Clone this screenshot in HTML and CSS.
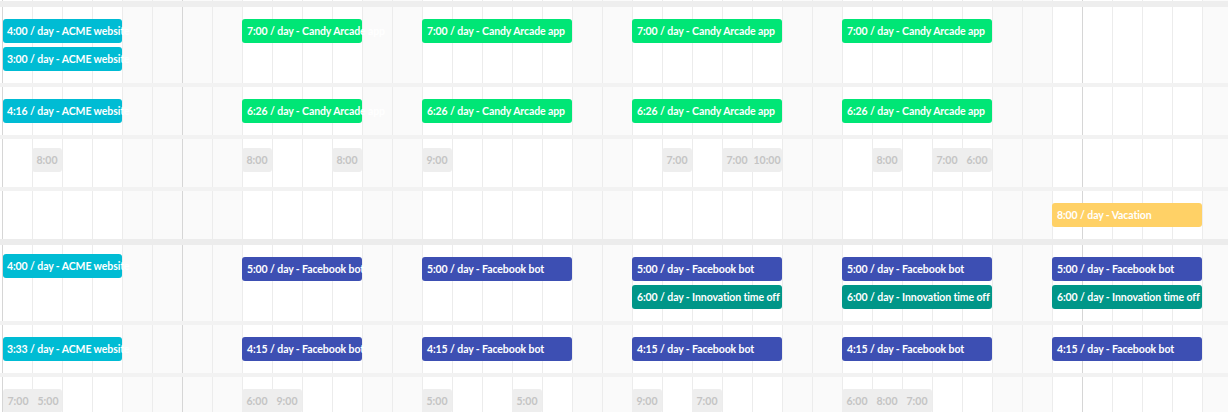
FILE: index.html
```html
<!DOCTYPE html>
<html lang="en">
<head>
<meta charset="utf-8">
<title>Schedule</title>
<link rel="stylesheet" href="styles.css">
</head>
<body>
<div class="board">
  <div class="strip"></div>
  <div class="band"></div>

  <div class="row tall">
    <div class="bar acme first" style="grid-column: 1 / span 4; grid-row: 1">4:00 / day - ACME website</div>
    <div class="bar acme first" style="grid-column: 1 / span 4; grid-row: 2">3:00 / day - ACME website</div>
    <div class="bar candy" style="grid-column: 9 / span 4; grid-row: 1">7:00 / day - Candy Arcade app</div>
    <div class="bar candy" style="grid-column: 15 / span 5; grid-row: 1">7:00 / day - Candy Arcade app</div>
    <div class="bar candy" style="grid-column: 22 / span 5; grid-row: 1">7:00 / day - Candy Arcade app</div>
    <div class="bar candy" style="grid-column: 29 / span 5; grid-row: 1">7:00 / day - Candy Arcade app</div>
  </div>
  <div class="sep"></div>

  <div class="row">
    <div class="bar acme first" style="grid-column: 1 / span 4">4:16 / day - ACME website</div>
    <div class="bar candy" style="grid-column: 9 / span 4">6:26 / day - Candy Arcade app</div>
    <div class="bar candy" style="grid-column: 15 / span 5">6:26 / day - Candy Arcade app</div>
    <div class="bar candy" style="grid-column: 22 / span 5">6:26 / day - Candy Arcade app</div>
    <div class="bar candy" style="grid-column: 29 / span 5">6:26 / day - Candy Arcade app</div>
  </div>
  <div class="sep"></div>

  <div class="row free">
    <div class="chip" style="grid-column: 2 / span 1"><span>8:00</span></div>
    <div class="chip" style="grid-column: 9 / span 1"><span>8:00</span></div>
    <div class="chip" style="grid-column: 12 / span 1"><span>8:00</span></div>
    <div class="chip" style="grid-column: 15 / span 1"><span>9:00</span></div>
    <div class="chip" style="grid-column: 23 / span 1"><span>7:00</span></div>
    <div class="chip" style="grid-column: 25 / span 2"><span>7:00</span><span>10:00</span></div>
    <div class="chip" style="grid-column: 30 / span 1"><span>8:00</span></div>
    <div class="chip" style="grid-column: 32 / span 2"><span>7:00</span><span>6:00</span></div>
  </div>
  <div class="sep"></div>

  <div class="row">
    <div class="bar vacation" style="grid-column: 36 / span 5">8:00 / day - Vacation</div>
  </div>
  <div class="sep thick"></div>

  <div class="row tall">
    <div class="bar acme first raised" style="grid-column: 1 / span 4; grid-row: 1">4:00 / day - ACME website</div>
    <div class="bar fb" style="grid-column: 9 / span 4; grid-row: 1">5:00 / day - Facebook bot</div>
    <div class="bar fb" style="grid-column: 15 / span 5; grid-row: 1">5:00 / day - Facebook bot</div>
    <div class="bar fb" style="grid-column: 22 / span 5; grid-row: 1">5:00 / day - Facebook bot</div>
    <div class="bar fb" style="grid-column: 29 / span 5; grid-row: 1">5:00 / day - Facebook bot</div>
    <div class="bar fb" style="grid-column: 36 / span 5; grid-row: 1">5:00 / day - Facebook bot</div>
    <div class="bar innov" style="grid-column: 22 / span 5; grid-row: 2">6:00 / day - Innovation time off</div>
    <div class="bar innov" style="grid-column: 29 / span 5; grid-row: 2">6:00 / day - Innovation time off</div>
    <div class="bar innov" style="grid-column: 36 / span 5; grid-row: 2">6:00 / day - Innovation time off</div>
  </div>
  <div class="sep"></div>

  <div class="row">
    <div class="bar acme first" style="grid-column: 1 / span 4">3:33 / day - ACME website</div>
    <div class="bar fb" style="grid-column: 9 / span 4">4:15 / day - Facebook bot</div>
    <div class="bar fb" style="grid-column: 15 / span 5">4:15 / day - Facebook bot</div>
    <div class="bar fb" style="grid-column: 22 / span 5">4:15 / day - Facebook bot</div>
    <div class="bar fb" style="grid-column: 29 / span 5">4:15 / day - Facebook bot</div>
    <div class="bar fb" style="grid-column: 36 / span 5">4:15 / day - Facebook bot</div>
  </div>
  <div class="sep"></div>

  <div class="row last">
    <div class="chip first" style="grid-column: 1 / span 2"><span>7:00</span><span>5:00</span></div>
    <div class="chip" style="grid-column: 9 / span 2"><span>6:00</span><span>9:00</span></div>
    <div class="chip" style="grid-column: 15 / span 1"><span>5:00</span></div>
    <div class="chip" style="grid-column: 18 / span 1"><span>5:00</span></div>
    <div class="chip" style="grid-column: 22 / span 1"><span>9:00</span></div>
    <div class="chip" style="grid-column: 24 / span 1"><span>7:00</span></div>
    <div class="chip" style="grid-column: 29 / span 3"><span>6:00</span><span>8:00</span><span>7:00</span></div>
  </div>
</div>
</body>
</html>
```

FILE: styles.css
```css
* { box-sizing: border-box; }

html, body {
  margin: 0;
  padding: 0;
  background: #ffffff;
}

body {
  font-family: Lato, "Liberation Sans", sans-serif;
  width: 1228px;
  height: 412px;
  overflow: hidden;
}

.board {
  width: 1228px;
  height: 412px;
  overflow: hidden;
  display: flex;
  flex-direction: column;
  background-color: #ffffff;
  background-image:
    linear-gradient(to right,
      transparent 2px, #d6d6d6 2px 3px,
      transparent 3px 182px, #d6d6d6 182px 183px,
      transparent 183px 1082px, #d6d6d6 1082px 1083px,
      transparent 1083px),
    linear-gradient(to right, #ececec 0 1px, transparent 1px),
    linear-gradient(to right,
      transparent 122px, #fafafa 122px 242px,
      transparent 242px 362px, #fafafa 362px 422px,
      transparent 422px 572px, #fafafa 572px 632px,
      transparent 632px 782px, #fafafa 782px 842px,
      transparent 842px 992px, #fafafa 992px 1052px,
      transparent 1052px 1202px, #fafafa 1202px);
  background-size: 100% 100%, 30px 100%, 100% 100%;
  background-position: 0 0, 2px 0, 0 0;
  background-repeat: no-repeat, repeat-x, no-repeat;
}

.strip { height: 1px; flex: none; }

.band {
  height: 6px;
  flex: none;
  background: #eeeeee;
}

.sep {
  height: 4px;
  flex: none;
  background: #f2f2f2;
}

.sep.thick {
  height: 6px;
  background: #ececec;
}

.row {
  flex: none;
  height: 48px;
  display: grid;
  grid-template-columns: repeat(41, 30px);
  grid-auto-rows: 24px;
  row-gap: 4px;
  align-content: start;
  padding: 12px 0 0 2px;
}

.row.tall { height: 76px; }
.row.free { padding-top: 9px; }
.row.last { flex: 1; }

.bar {
  height: 24px;
  border-radius: 3px;
  color: #ffffff;
  font-size: 10.5px;
  letter-spacing: -0.1px;
  font-weight: 700;
  line-height: 24px;
  padding-left: 5px;
  white-space: nowrap;
  overflow: visible;
}

.bar.first { margin-left: 1px; padding-left: 4px; }
.bar.raised { margin-top: -3px; }

.acme { background: #00bcd4; }
.candy { background: #00e676; }
.fb { background: #3d4fb3; }
.innov { background: #009688; }
.vacation { background: #ffd166; }

.chip {
  height: 24px;
  display: flex;
  background: #eeeeee;
  border-radius: 3px;
  color: #c4c4c4;
  font-size: 10.5px;
  font-weight: 700;
  line-height: 24px;
}

.chip.first { margin-left: 1px; }

.chip span {
  width: 30px;
  flex: none;
  text-align: center;
}
```
